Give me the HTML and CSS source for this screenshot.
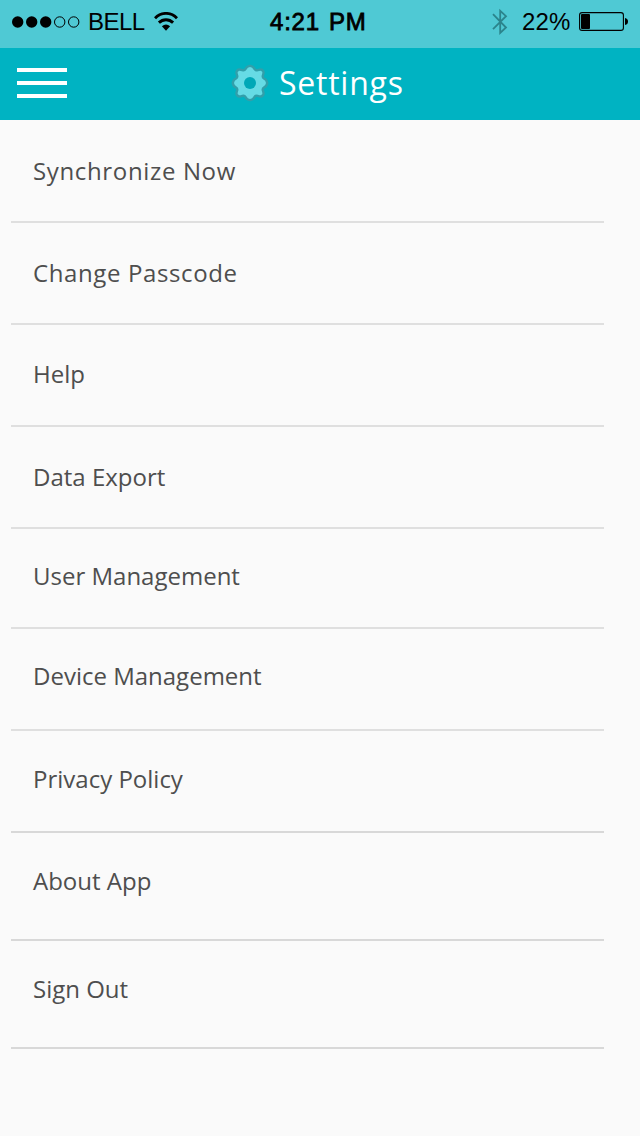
FILE: index.html
```html
<!DOCTYPE html>
<html lang="en">
<head>
<meta charset="utf-8">
<title>Settings</title>
<link rel="stylesheet" href="styles.css">
</head>
<body>
<div class="status">
  <div class="carrier">
    <svg class="signal" width="68" height="12" viewBox="0 0 68 12"><circle cx="5.7" cy="6" r="5.7"/><circle cx="19.7" cy="6" r="5.7"/><circle cx="33.7" cy="6" r="5.7"/><g fill="none" stroke="#000" stroke-width="1"><circle cx="47.7" cy="6" r="5.2"/><circle cx="61.7" cy="6" r="5.2"/></g></svg>
    <span class="network">BELL</span>
    <svg class="wifi" width="24" height="19" viewBox="0 0 24 19"><g fill="none" stroke="#000" stroke-width="2.9"><path d="M1 6.2C7.2-.2 16.8-.2 23 6.2"/><path d="M4.9 10.6C8.9 6.7 15.1 6.7 19.1 10.6"/></g><path d="M7.9 14.3Q12 10.9 16.1 14.3L12 18.7Z"/></svg>
  </div>
  <span class="time">4:21 PM</span>
  <div class="power">
    <svg width="16" height="28" viewBox="0 0 16 28" fill="none" stroke="#2b848c" stroke-width="1.8"><path d="M1 6.2 14 19.5 8.2 25V2.8L14 8.2 1 21.2"/></svg>
    <span class="percent">22%</span>
    <svg class="battery" width="49" height="19" viewBox="0 0 49 19"><rect x=".6" y=".6" width="43.8" height="17.8" rx="2.5" fill="none" stroke="#000" stroke-width="1.1"/><rect x="2" y="2" width="9" height="15" rx="1"/><path d="M46 6Q49 6.5 49 9.5T46 13Z"/></svg>
  </div>
</div>
<header class="header">
  <div class="menu"><i></i><i></i><i></i></div>
  <svg class="gear" width="40" height="40" viewBox="-20 -20 40 40"><path fill="#66dbe5" stroke="#329faa" stroke-width="4.8" stroke-linejoin="round" paint-order="stroke" d="M0-16Q2.5-15.6 3.4-13.4Q5-10.8 8-11.8Q11.5-13 11.6-11.6Q13-11.5 11.8-8Q10.8-5 13.4-3.4Q15.6-2.5 16 0Q15.6 2.5 13.4 3.4Q10.8 5 11.8 8Q13 11.5 11.6 11.6Q11.5 13 8 11.8Q5 10.8 3.4 13.4Q2.5 15.6 0 16Q-2.5 15.6-3.4 13.4Q-5 10.8-8 11.8Q-11.5 13-11.6 11.6Q-13 11.5-11.8 8Q-10.8 5-13.4 3.4Q-15.6 2.5-16 0Q-15.6-2.5-13.4-3.4Q-10.8-5-11.8-8Q-13-11.5-11.6-11.6Q-11.5-13-8-11.8Q-5-10.8-3.4-13.4Q-2.5-15.6 0-16Z"/><circle r="6" fill="#00a8b7"/></svg>
  <h1 class="title">Settings</h1>
</header>
<ul class="list">
  <li class="row sync">Synchronize Now</li>
  <li class="row passcode">Change Passcode</li>
  <li class="row help">Help</li>
  <li class="row export">Data Export</li>
  <li class="row users">User Management</li>
  <li class="row devices">Device Management</li>
  <li class="row privacy">Privacy Policy</li>
  <li class="row about">About App</li>
  <li class="row signout">Sign Out</li>
</ul>
</body>
</html>
```
FILE: styles.css
```css
* { box-sizing: border-box; }
body { margin: 0; background: #fafafa; color: #4e4e4e; font-family: "Open Sans", "Noto Sans", sans-serif; }
svg { display: block; flex: none; }
.status { height: 48px; padding: 0 12px; background: #4fc9d4; color: #000; display: grid; grid-template-columns: 258px 1fr auto; font-family: "Liberation Sans", Arial, sans-serif; font-size: 24px; line-height: 44px; white-space: nowrap; }
.carrier, .power { display: flex; align-items: center; height: 43px; }
.network { margin-left: 8px; width: 58px; letter-spacing: -.5px; }
.wifi { margin-left: 8px; margin-top: -1px; }
.time { letter-spacing: .8px; word-spacing: 1.5px; -webkit-text-stroke: .8px #000; }
.percent { margin-left: 14px; width: 49px; letter-spacing: .2px; }
.battery { margin-left: 8px; }
.header { height: 72px; background: #00b3c2; display: flex; align-items: center; padding: 0 17px 2px; }
.menu { width: 50px; display: flex; flex-direction: column; gap: 9px; margin-right: 163px; }
.menu i { height: 4px; background: #fff; }
.title { margin: 0 0 0 9px; color: #fff; font-size: 32px; font-weight: 400; letter-spacing: .75px; line-height: 44px; }
.list { list-style: none; margin: 0; padding: 0 36px 0 11px; }
.row { height: 102px; padding: 33px 0 0 22px; border-bottom: 2px solid #dfdfdf; font-size: 24px; line-height: 32px; white-space: nowrap; }
.sync { height: 103px; padding-top: 35px; letter-spacing: .65px; }
.passcode { padding-top: 34px; letter-spacing: .62px; }
.export { padding-top: 34px; }
.users { height: 100px; padding-top: 31px; }
.devices { padding-top: 31px; }
.privacy, .about, .signout { padding-top: 32px; border-color: #d8d8d8; }
.about, .signout { height: 108px; }
```
